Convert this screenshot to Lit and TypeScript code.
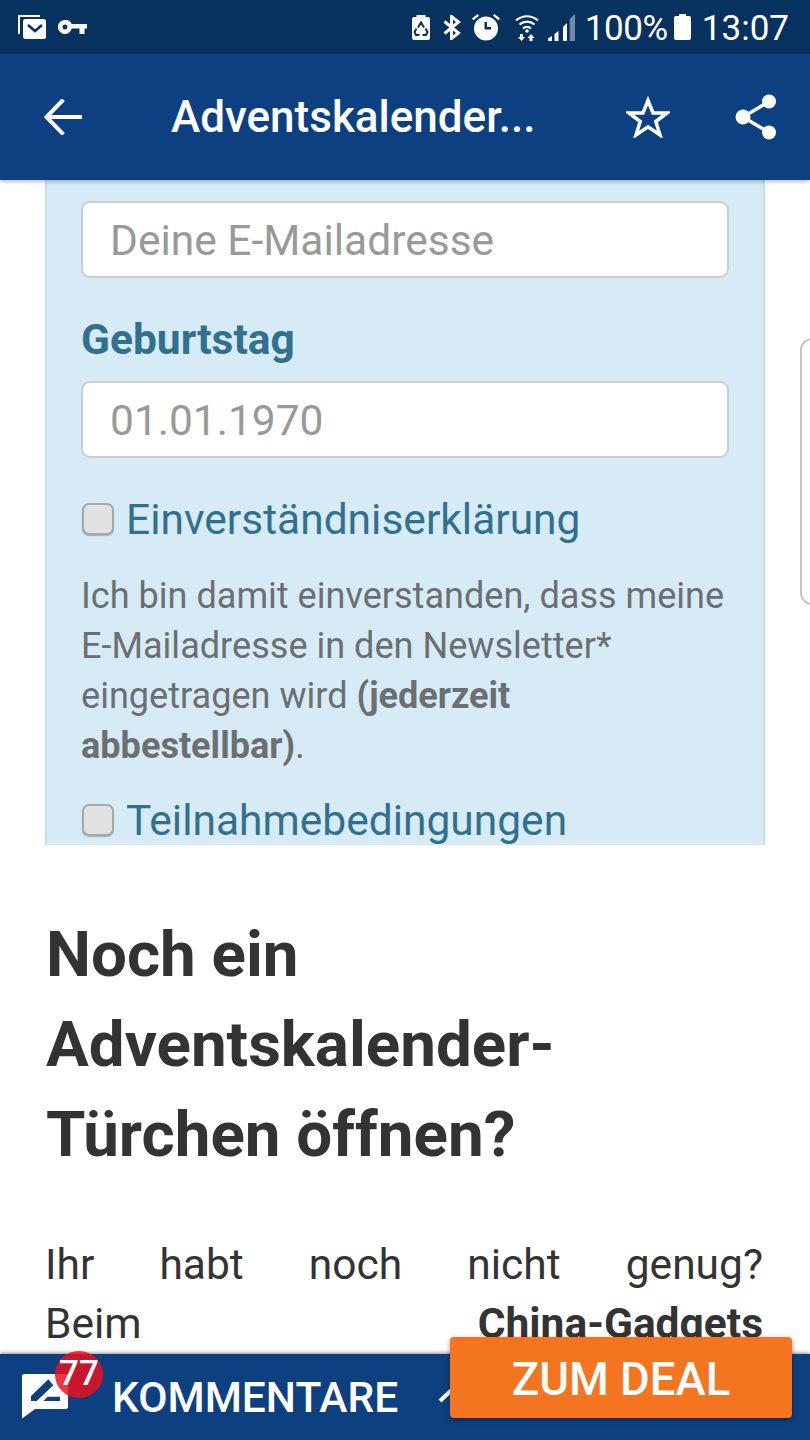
import { LitElement, html, css } from 'lit';
import { customElement } from 'lit/decorators.js';

@customElement('app-root')
export class AppRoot extends LitElement {
    static styles = css`
      :host {
        display: block;
        position: relative;
        width: 810px;
        height: 1440px;
        overflow: hidden;
        background: #fff;
        font-family: Roboto, sans-serif;
      }

      .screen {
        display: flex;
        flex-direction: column;
        height: 1440px;
      }

      /* status bar */
      .status {
        flex: none;
        height: 54px;
        display: flex;
        align-items: center;
        padding: 0 21px 0 18px;
        background: #07315f;
        color: #fff;
        font-size: 35px;
      }
      .status svg { display: block; flex: none; fill: #fff; }
      .status svg.bt { fill: none; }
      .status .spacer { flex: 1; }
      .pct { margin: 2px 0 0 10px; letter-spacing: -0.4px; }
      .clock { margin: 2px 0 0 11px; }

      /* app bar */
      .appbar {
        flex: none;
        position: relative;
        z-index: 2;
        height: 126px;
        display: flex;
        align-items: center;
        padding-left: 44px;
        background: #0d4081;
        color: #fff;
        box-shadow: 0 1px 5px rgba(0, 0, 0, 0.35);
      }
      .appbar svg { display: block; flex: none; }
      .title {
        width: 364px;
        margin-left: 89px;
        font-size: 44px;
        font-weight: 500;
        white-space: nowrap;
      }
      .star { margin-left: 91px; }
      .share { margin-left: 65px; }

      /* content */
      .content {
        flex: 1;
        min-height: 0;
        overflow: hidden;
        padding: 0 46px;
      }
      .panel {
        box-sizing: border-box;
        width: 720px;
        height: 665px;
        margin-left: -1px;
        padding: 21px 34px 0;
        overflow: hidden;
        background: #d7ebf6;
        border: solid #bfe2ef;
        border-width: 0 2px;
      }
      .field {
        box-sizing: border-box;
        height: 77px;
        display: flex;
        align-items: center;
        padding: 2px 0 0 27px;
        background: #fff;
        border: 2px solid #cbced0;
        border-radius: 9px;
        color: #999;
        font-size: 42.5px;
      }
      .label {
        margin: 37px 0 16px;
        height: 50px;
        line-height: 50px;
        color: #31708f;
        font-size: 42.5px;
        font-weight: 700;
      }
      .check {
        display: flex;
        align-items: center;
        height: 60px;
        color: #31708f;
        font-size: 42.5px;
      }
      .check i {
        box-sizing: border-box;
        flex: none;
        width: 32px;
        height: 32px;
        margin: 0 12px 0 1px;
        background: #e1e2e3;
        border: 2px solid #a6a9ab;
        border-radius: 7px;
        box-shadow: 0 1px 1px rgba(0, 0, 0, 0.25);
      }
      .consent { margin-top: 31px; }
      .consent-text {
        margin: 22px 0 19px;
        color: #6b6f72;
        font-size: 36.1px;
        line-height: 50px;
      }
      .consent-text span { white-space: nowrap; }

      h2 {
        margin: 65px 0 0;
        color: #333;
        font-size: 63.7px;
        font-weight: 700;
        line-height: 90px;
      }
      .body {
        margin: 55px 1px 0 -1px;
        color: #333;
        font-size: 42.5px;
        line-height: 59px;
      }
      .body b { font-weight: 700; }
      .line { display: block; text-align: justify; text-align-last: justify; }

      /* bottom bar */
      .bottom {
        flex: none;
        position: relative;
        z-index: 2;
        height: 86px;
        display: flex;
        align-items: center;
        padding-left: 22px;
        background: #0d4081;
        color: #fff;
        box-shadow: 0 -1px 4px rgba(0, 0, 0, 0.45);
      }
      .comment { position: relative; flex: none; display: block; margin-bottom: 3px; }
      .comment svg { display: block; }
      .word {
        margin-left: 44px;
        font-size: 42.5px;
        font-weight: 500;
      }
      .chev { margin: 0 0 8px 40px; flex: none; }
      .badge {
        position: absolute;
        left: 33px;
        top: -22px;
        width: 48px;
        height: 47px;
        padding-bottom: 2px;
        box-sizing: border-box;
        display: flex;
        align-items: center;
        justify-content: center;
        border-radius: 50%;
        background: rgba(237, 16, 27, 0.835);
        color: #fff;
        font-size: 35px;
        font-weight: 500;
      }
      .deal {
        position: absolute;
        z-index: 3;
        left: 450px;
        top: 1337px;
        box-sizing: border-box;
        width: 342px;
        height: 81px;
        padding-top: 3px;
        display: flex;
        align-items: center;
        justify-content: center;
        background: #f5741f;
        border-radius: 4px;
        color: #fff;
        font-size: 45.5px;
        font-weight: 500;
        box-shadow: 0 2px 5px rgba(0, 0, 0, 0.4);
      }

      /* card peeking in from the right edge */
      .peek {
        position: absolute;
        left: 800px;
        top: 338px;
        width: 30px;
        height: 267px;
        box-sizing: border-box;
        border: 2px solid #c4c4c4;
        border-radius: 12px;
      }
    `;

    private _statusLeft() {
        return html`
          <svg width="28" height="24" viewBox="0 0 28 24">
            <path d="M1 0h21v2H2v17H0V1a1 1 0 0 1 1-1z"/>
            <rect x="5" y="4" width="23" height="20" rx="2.500"/>
            <path d="M10 10l7 6 7-6" fill="none" stroke="#07315f" stroke-width="2.500"/>
          </svg>
          <svg style="margin-left:12px" width="29" height="14" viewBox="0 0 29 14">
            <path fill-rule="evenodd" d="M7 0a7 7 0 0 1 6.700 4H29v4.500h-2.500V14h-5V8.500h-7.800A7 7 0 1 1 7 0zm0 4.500a2.500 2.500 0 1 0 0 5 2.500 2.500 0 0 0 0-5z"/>
          </svg>
        `;
    }

    private _statusRight() {
        return html`
          <svg width="18" height="25" viewBox="0 0 18 25">
            <path d="M4.500 0h9v2H16a2 2 0 0 1 2 2v19a2 2 0 0 1-2 2H2a2 2 0 0 1-2-2V4a2 2 0 0 1 2-2h2.500z"/>
            <path d="M6 12.500 9 7.500l3 5M13.500 13.500l2 3.500-1.500 3h-3.500M7.500 20H4l-1.500-3 2-3.500" fill="none" stroke="#07315f" stroke-width="2"/>
          </svg>
          <svg class="bt" style="margin-left:13px" width="18" height="25" viewBox="0 0 18 25" stroke="#fff" stroke-width="3">
            <path d="M1.500 6.500 15.500 18 8.500 23.500V1.500L15.500 7 1.500 18.500"/>
          </svg>
          <svg style="margin-left:11px" width="28" height="27" viewBox="0 0 28 27">
            <path fill-rule="evenodd" d="M14 2.500a12 12 0 1 1 0 24 12 12 0 0 1 0-24zM12.500 8v7.500H19V13h-4V8z"/>
            <path d="M0 4.500 5.500 0 7 1.800 1.500 6.300zM28 4.500 22.500 0 21 1.800 26.500 6.300z"/>
          </svg>
          <svg style="margin-left:15px" width="24" height="27" viewBox="0 0 24 27">
            <g fill="none" stroke="#fff" stroke-width="2.200">
              <path d="M1 6.500C7.500.8 16.500.8 23 6.500"/>
              <path d="M4.500 10.500C9 6.700 15 6.700 19.500 10.500"/>
              <path d="M8 14.500c2.500-2 5.500-2 8 0"/>
            </g>
            <circle cx="12" cy="17" r="1.800"/>
            <path d="M5 20h3v3h2l-3.500 4L3 23h2zM16 20l3.500 4h-2v3h-3v-3h-2z"/>
          </svg>
          <svg style="margin-left:9px" width="27" height="27" viewBox="0 0 27 27">
            <path d="M0 27v-2.500L4 22v5zM6.500 27v-7l4-3v10zM15 27V13l4-4v18z"/>
            <path fill="#6f8cae" d="M21.700 27V5L27 0v27z"/>
          </svg>
          <span class="pct">100%</span>
          <svg style="margin-left:6px" width="17" height="26" viewBox="0 0 17 26">
            <path d="M5 0h7v2h3a2 2 0 0 1 2 2v20a2 2 0 0 1-2 2H2a2 2 0 0 1-2-2V4a2 2 0 0 1 2-2h3z"/>
          </svg>
          <span class="clock">13:07</span>
        `;
    }

    render() {
        return html`
      <div class="screen">
        <div class="status">
          ${this._statusLeft()}
          <span class="spacer"></span>
          ${this._statusRight()}
        </div>

        <div class="appbar">
          <svg width="38" height="36" viewBox="0 0 38 36" fill="none" stroke="#fff" stroke-width="4" stroke-linecap="square">
            <path d="M36 18H3M18 2 2.500 18 18 34"/>
          </svg>
          <div class="title">Adventskalender...</div>
          <svg class="star" width="44" height="42" viewBox="0 0 44 42" fill="none" stroke="#fff" stroke-width="3.500">
            <path d="M22 4.500 27 17h14l-11.200 8.500L34 39 22 30.800 10 39l4.200-13.500L3 17h14z"/>
          </svg>
          <svg class="share" width="42" height="46" viewBox="0 0 42 46" fill="#fff">
            <circle cx="8" cy="23" r="7.500"/>
            <circle cx="34" cy="7.500" r="7"/>
            <circle cx="34" cy="38.500" r="7"/>
            <path d="M8 23 34 7.500M8 23l26 15.500" stroke="#fff" stroke-width="3.500"/>
          </svg>
        </div>

        <div class="content">
          <div class="panel">
            <div class="field">Deine E-Mailadresse</div>
            <div class="label">Geburtstag</div>
            <div class="field">01.01.1970</div>
            <div class="check consent"><i></i>Einverständniserklärung</div>
            <div class="consent-text">
              Ich bin damit einverstanden, dass meine <span>E-Mailadresse</span> in den Newsletter* eingetragen wird <b>(jederzeit abbestellbar)</b>.
            </div>
            <div class="check"><i></i>Teilnahmebedingungen</div>
          </div>

          <h2>Noch ein Adventskalender-Türchen öffnen?</h2>
          <p class="body">
            <span class="line">Ihr habt noch nicht genug?</span>
            <span class="line">Beim <b>China-Gadgets</b></span>
          </p>
        </div>

        <div class="bottom">
          <div class="comment">
            <svg width="46" height="46" viewBox="0 0 46 46">
              <path fill="#fff" d="M2.500 1h41A2.500 2.500 0 0 1 46 3.500v30a2.500 2.500 0 0 1-2.500 2.500H13L0 45.500V3.500A2.500 2.500 0 0 1 2.500 1z"/>
              <path fill="#0d4081" d="M9 23 26.300 6.300l5 6L14.700 28H9zM21.300 28l4.400-4.300H38V28z"/>
            </svg>
            <div class="badge">77</div>
          </div>
          <span class="word">KOMMENTARE</span>
          <svg class="chev" width="40" height="24" viewBox="0 0 40 24" fill="none" stroke="#fff" stroke-width="4">
            <path d="M2 20 20 3l18 17"/>
          </svg>
        </div>
      </div>

      <div class="peek"></div>
      <div class="deal">ZUM DEAL</div>
    `;
    }
}
